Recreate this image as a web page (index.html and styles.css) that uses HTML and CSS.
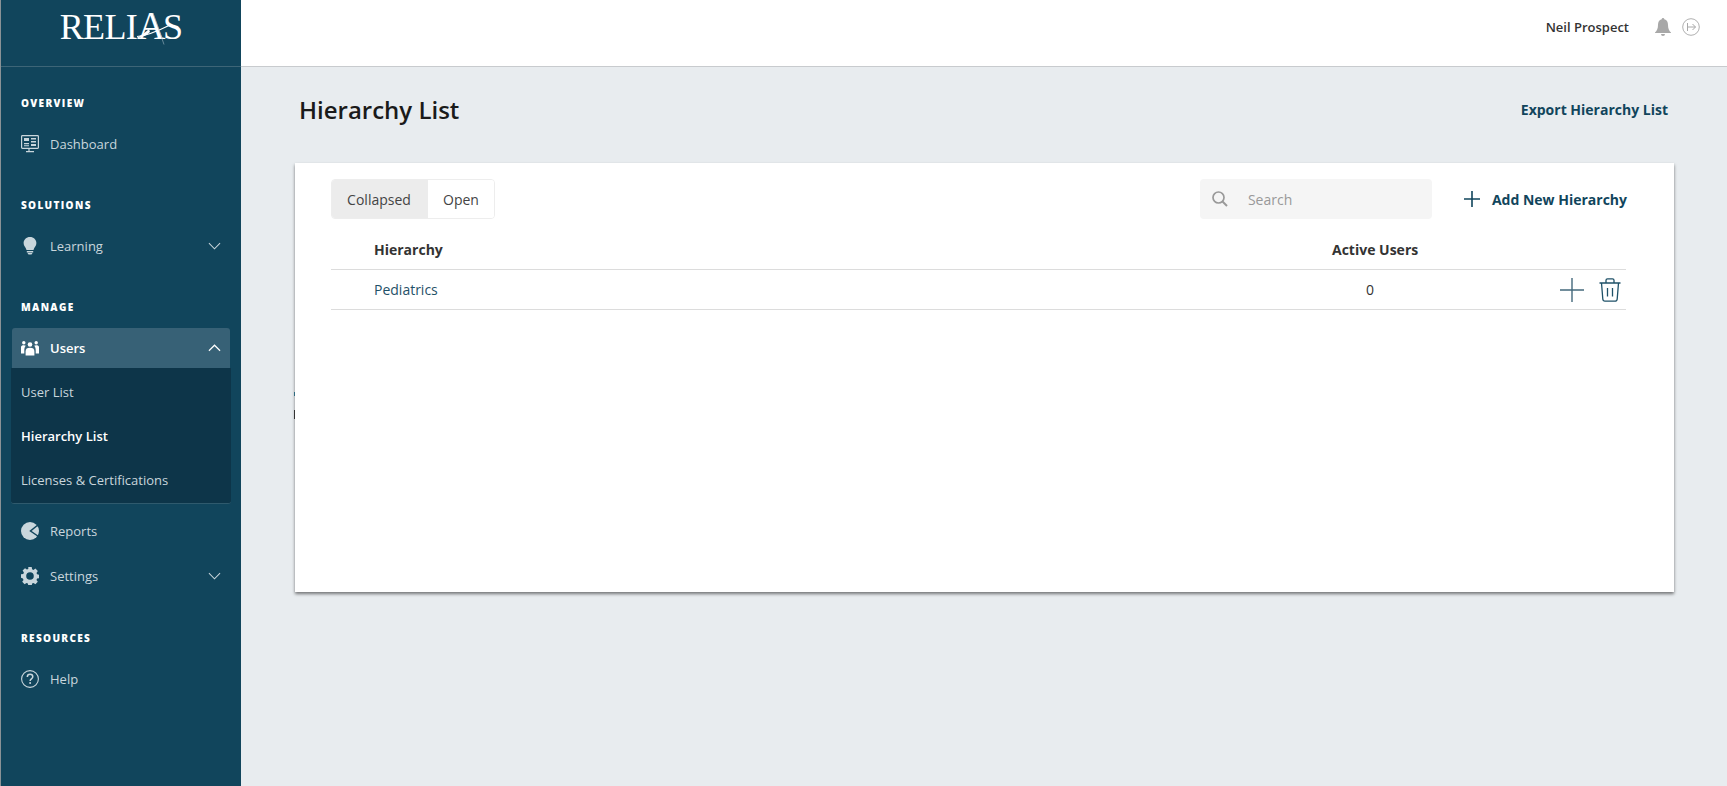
FILE: index.html
```html
<!DOCTYPE html>
<html lang="en">
<head>
<meta charset="utf-8">
<title>Hierarchy List</title>
<link rel="stylesheet" href="styles.css">
</head>
<body>
<div class="app">
  <aside class="sidebar">
    <div class="brand">
      <span class="logo">RELI<span class="logo-a">A<svg class="logo-swoosh" viewBox="0 0 40 36" aria-hidden="true"><path d="M4 24.500C13 24 25 19 37 13" fill="none" stroke="#fff" stroke-width="1.200"/><path d="M3 26.500C8 26 13 24 17 20L16 17C12 21 7 24 3 26.500Z" fill="#fff"/><path d="M20 1L31 32.500" fill="none" stroke="#9fb6c2" stroke-width=".6"/></svg></span>S</span>
    </div>
    <nav class="nav">
      <h2 class="nav-label first">OVERVIEW</h2>
      <a class="nav-item">
        <svg class="nav-icon" viewBox="0 0 18 18"><rect x=".6" y=".6" width="16.800" height="12.800" rx=".8" fill="none" stroke="currentColor" stroke-width="1.200"/><path d="M3 3h5v3H3zM10 3h5v1.500h-5zM10 6h5v1.500h-5zM3 8h5v1.300H3zM3 10.300h5v1H3zM10 9h5v2h-5z" fill="currentColor"/><path d="M8 14v2M5 16.600h8" stroke="currentColor" stroke-width="1.200"/></svg>
        <span>Dashboard</span>
      </a>
      <h2 class="nav-label">SOLUTIONS</h2>
      <a class="nav-item">
        <svg class="nav-icon" viewBox="0 0 18 18"><path d="M9 0C5.300 0 2.600 2.700 2.600 6c0 2.800 2.100 4.200 2.900 7h7c.8-2.800 2.900-4.200 2.900-7 0-3.300-2.700-6-6.400-6z" fill="currentColor"/><path d="M5.800 14h6.400v1.400H5.800zM6.500 16h5l-1 1.600h-3z" fill="currentColor"/></svg>
        <span>Learning</span>
        <svg class="chev" viewBox="0 0 14 8"><path d="M1 1l6 6 6-6" fill="none" stroke="currentColor" stroke-width="1.100"/></svg>
      </a>
      <h2 class="nav-label">MANAGE</h2>
      <a class="nav-item open">
        <svg class="nav-icon" viewBox="0 0 18 18"><g fill="currentColor"><circle cx="9" cy="5.500" r="2.300"/><circle cx="2.800" cy="3.800" r="1.700"/><circle cx="15.200" cy="3.800" r="1.700"/><path d="M4.600 16.500v-4C4.600 9.800 6 8.800 9 8.800s4.400 1 4.400 3.700v4z"/><path d="M0 14.500V8.300C0 6.700 1.300 6.200 2.800 6.200c.9 0 1.600.2 2 .6C3.500 8 3.300 10 3.300 11.500v3zM18 14.500V8.300c0-1.600-1.300-2.100-2.800-2.100-.9 0-1.600.2-2 .6 1.300 1.200 1.500 3.200 1.500 4.700v3z"/></g></svg>
        <span>Users</span>
        <svg class="chev" viewBox="0 0 14 8"><path d="M1 7l6-6 6 6" fill="none" stroke="currentColor" stroke-width="1.300"/></svg>
      </a>
      <div class="subnav">
        <a class="sub-item">User List</a>
        <a class="sub-item active">Hierarchy List</a>
        <a class="sub-item">Licenses &amp; Certifications</a>
      </div>
      <a class="nav-item reports">
        <svg class="nav-icon" viewBox="0 0 18 18"><circle cx="9" cy="9" r="9" fill="currentColor"/><path d="M17.500 2.500L9.500 9l8 5.500" fill="none" stroke="#11455c" stroke-width="1.500"/></svg>
        <span>Reports</span>
      </a>
      <a class="nav-item settings">
        <svg class="nav-icon" viewBox="0 0 18 18"><path fill="currentColor" fill-rule="evenodd" d="M7.300 0h3.400l.4 2.300 1.400.6 1.900-1.300 2.400 2.400-1.300 1.900.6 1.400 2.300.4v3.400l-2.300.4-.6 1.400 1.300 1.900-2.400 2.400-1.900-1.300-1.400.6-.4 2.300H7.300l-.4-2.300-1.400-.6-1.900 1.300-2.400-2.400 1.300-1.900-.6-1.400L0 10.700V7.300l2.300-.4.6-1.400-1.300-1.900L4 1.200l1.900 1.300 1.400-.6zM9 5.200a3.800 3.800 0 1 0 0 7.600 3.800 3.800 0 0 0 0-7.600z"/></svg>
        <span>Settings</span>
        <svg class="chev" viewBox="0 0 14 8"><path d="M1 1l6 6 6-6" fill="none" stroke="currentColor" stroke-width="1.100"/></svg>
      </a>
      <h2 class="nav-label">RESOURCES</h2>
      <a class="nav-item">
        <svg class="nav-icon" viewBox="0 0 18 18"><circle cx="9" cy="9" r="8.400" fill="none" stroke="currentColor" stroke-width="1.100"/><path d="M6.300 7c0-1.700 1.200-2.700 2.800-2.700S11.800 5.300 11.800 6.800c0 2-2.700 2.200-2.700 4.200" fill="none" stroke="currentColor" stroke-width="1.500"/><circle cx="9.100" cy="13" r="1" fill="currentColor"/></svg>
        <span>Help</span>
      </a>
    </nav>
  </aside>
  <div class="body">
    <header class="topbar">
      <span class="user">Neil Prospect</span>
      <svg class="bell" viewBox="0 0 16 18"><path d="M8 0c-.8 0-1.300.6-1.300 1.300C4 2 3 4 3 7c0 4-1.200 5.700-3 7.500V15h16v-.5C14.200 12.700 13 11 13 7c0-3-1-5-3.700-5.700C9.300.6 8.800 0 8 0zM6 16h4a2 2 0 0 1-4 0z" fill="#a8a8a8"/></svg>
      <svg class="exit" viewBox="0 0 18 18"><circle cx="9" cy="9" r="8.300" fill="none" stroke="#b0b0b0" stroke-width="1"/><path d="M5.500 5v8M6 9h7.500M10.500 6L13.500 9l-3 3" fill="none" stroke="#a8a8a8" stroke-width="1"/></svg>
    </header>
    <main class="content">
      <div class="page-head">
        <h1 class="title">Hierarchy List</h1>
        <a class="export">Export Hierarchy List</a>
      </div>
      <section class="card">
        <i class="mark mark-teal"></i>
        <i class="mark mark-dark"></i>
        <div class="toolbar">
          <div class="toggle">
            <button class="toggle-btn selected">Collapsed</button>
            <button class="toggle-btn">Open</button>
          </div>
          <div class="search">
            <svg class="search-icon" viewBox="0 0 16 16"><circle cx="6.500" cy="6.500" r="5.500" fill="none" stroke="#999" stroke-width="1.700"/><path d="M10.500 10.500l4.500 4.500" stroke="#999" stroke-width="2"/></svg>
            <span class="search-text">Search</span>
          </div>
          <a class="add">
            <svg class="add-icon" viewBox="0 0 16 16"><path d="M8 0v16M0 8h16" stroke="#11455c" stroke-width="1.600"/></svg>
            <span>Add New Hierarchy</span>
          </a>
        </div>
        <div class="table-row table-head">
          <span>Hierarchy</span>
          <span class="nowrap">Active Users</span>
          <span></span>
        </div>
        <div class="table-row">
          <a class="link">Pediatrics</a>
          <span class="count">0</span>
          <span class="actions">
            <svg class="act-plus" viewBox="0 0 24 24"><path d="M12 0v24M0 12h24" stroke="#44697c" stroke-width="1.400"/></svg>
            <svg class="act-trash" viewBox="0 0 22 24"><path d="M.5 5h21M7 5V2.300C7 1.300 7.600.8 8.500.8h5c.9 0 1.500.5 1.500 1.500V5M2.500 5l1.300 16c.1 1.300 1 2.200 2.200 2.200h10c1.200 0 2.100-.9 2.200-2.200L19.500 5M8.500 10v8.500M13.500 10v8.500" fill="none" stroke="#1f5168" stroke-width="1.300"/></svg>
          </span>
        </div>
      </section>
    </main>
  </div>
</div>
</body>
</html>
```

FILE: styles.css
```css
* { box-sizing: border-box; }
html, body { margin: 0; height: 100%; }
body {
  font-family: "Open Sans", "Liberation Sans", sans-serif;
  font-size: 14px;
  color: #333;
  background: #e8ecef;
  overflow: hidden;
}
.app { display: flex; height: 786px; }

/* Sidebar */
.sidebar {
  width: 241px;
  flex: none;
  background: #11455c;
  border-left: 1px solid #8a9296;
  color: #c9d6dc;
}
.brand {
  height: 67px;
  border-bottom: 1px solid #3d6577;
  display: flex;
  justify-content: center;
  padding-top: 4px;
}
.logo {
  font-family: "Liberation Serif", serif;
  font-size: 36px;
  line-height: 44px;
  color: #fff;
  letter-spacing: -.6px;
}
.logo-a { position: relative; font-size: 39px; letter-spacing: -2.500px; }
.logo-swoosh {
  position: absolute;
  left: -4px;
  top: 8px;
  width: 40px;
  height: 36px;
}
.nav { padding: 26px 10px 0 10px; font-size: 13px; }
.nav-label {
  margin: 29px 0 9px 10px;
  font-size: 10px;
  line-height: 20px;
  font-weight: 800;
  letter-spacing: 1.35px;
  color: #fff;
}
.nav-label.first { margin-top: 0; }
.nav-item {
  display: flex;
  align-items: center;
  height: 44px;
  padding-left: 10px;
}
.nav-icon { width: 18px; height: 18px; flex: none; margin-right: 11px; }
.chev { width: 13px; height: 8px; margin-left: auto; margin-right: 10px; }
.nav-item.open {
  height: 40px;
  margin: 0 1px;
  padding-left: 9px;
  background: #376176;
  border-radius: 3px 3px 0 0;
  color: #fff;
  font-weight: 600;
}
.nav-label + .nav-item.open { margin-top: 11px; }
.nav-item.open .chev { margin-right: 9px; }
.subnav {
  height: 136px;
  padding-top: 2px;
  background: #0d3549;
  border-bottom: 1px solid #2f5a6d;
  border-radius: 0 0 3px 3px;
}
.sub-item {
  display: flex;
  align-items: center;
  height: 44px;
  padding-left: 10px;
}
.sub-item.active { color: #fff; font-weight: 600; }
.reports { margin-top: 4px; height: 45px; }
.settings { height: 46px; }

/* Main column */
.body { flex: 1; min-width: 0; display: flex; flex-direction: column; }
.topbar {
  height: 67px;
  flex: none;
  background: #fff;
  border-bottom: 1px solid #c8cbce;
  display: flex;
  align-items: center;
  justify-content: flex-end;
  padding: 0 27px 13px 0;
}
.user { font-size: 13px; font-weight: 600; color: #333; margin-right: 26px; }
.bell { width: 16px; height: 18px; margin-right: 11px; }
.exit { width: 18px; height: 18px; }
.content { padding: 0 53px 0 54px; }
.page-head {
  display: flex;
  align-items: center;
  justify-content: space-between;
  height: 96px;
  padding: 0 6px 11px 4px;
}
.title { margin: 0; font-size: 24px; font-weight: 600; color: #1a1a1a; }
.export { font-size: 14px; font-weight: 700; color: #11455c; }

/* Card */
.card {
  position: relative;
  height: 429px;
  background: #fff;
  padding: 16px 48px 0 36px;
  box-shadow: 0 2px 3px rgba(0, 0, 0, .5);
}
.mark { position: absolute; left: -1px; width: 1px; }
.mark-teal { top: 229px; height: 4px; background: #2d6a80; }
.mark-dark { top: 247px; height: 9px; background: #333; }
.toolbar { display: flex; align-items: center; height: 40px; margin-right: -1px; }
.toggle {
  display: flex;
  height: 40px;
  border: 1px solid #ededed;
  border-radius: 4px;
  overflow: hidden;
}
.toggle-btn {
  border: 0;
  background: #fff;
  font: inherit;
  color: #444;
  padding: 0 15px;
}
.toggle-btn.selected { background: #ececec; width: 96px; padding: 0 2px 0 0; }
.search {
  display: flex;
  align-items: center;
  width: 232px;
  height: 40px;
  margin-left: auto;
  background: #f5f5f5;
  border-radius: 4px;
  padding-left: 12px;
}
.search-icon { width: 16px; height: 16px; margin-right: 20px; }
.search-text { color: #999; }
.add { display: flex; align-items: center; margin-left: 32px; font-weight: 700; color: #11455c; }
.add-icon { width: 16px; height: 16px; margin-right: 12px; }
.table-row {
  display: grid;
  grid-template-columns: 958px 86px 1fr;
  align-items: center;
  height: 40px;
  padding-left: 43px;
  border-bottom: 1px solid #dcdcdc;
}
.table-head { height: 51px; padding-top: 10px; font-weight: 700; color: #333; }
.nowrap { white-space: nowrap; }
.link { color: #1f5168; }
.count { padding-left: 34px; }
.actions { display: flex; align-items: center; justify-content: flex-end; padding-right: 5px; gap: 15px; }
.act-plus { width: 24px; height: 24px; }
.act-trash { width: 22px; height: 24px; }
```
